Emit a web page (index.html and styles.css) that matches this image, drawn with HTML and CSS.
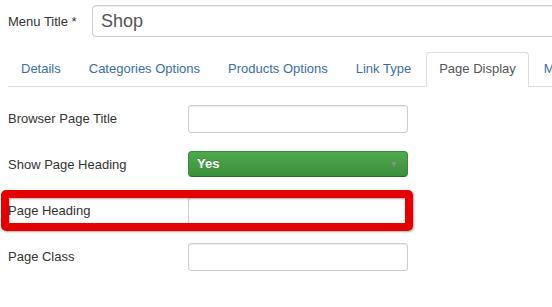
FILE: index.html
```html
<!DOCTYPE html>
<html>
<head>
<meta charset="utf-8">
<link rel="stylesheet" href="styles.css">
</head>
<body>
<div class="title-row">
  <label class="title-label">Menu Title *</label>
  <div class="title-input">Shop</div>
</div>
<ul class="tabs">
  <li><a>Details</a></li>
  <li><a>Categories Options</a></li>
  <li><a>Products Options</a></li>
  <li><a>Link Type</a></li>
  <li class="active"><a>Page Display</a></li>
  <li><a>Metadata</a></li>
</ul>
<div class="tab-content">
  <div class="control-group">
    <div class="control-label">Browser Page Title</div>
    <div class="text-input"></div>
  </div>
  <div class="control-group">
    <div class="control-label">Show Page Heading</div>
    <div class="select-yes"><span>Yes</span><i class="caret"></i></div>
  </div>
  <div class="control-group highlighted">
    <div class="control-label">Page Heading</div>
    <div class="text-input"></div>
    <div class="red-box"></div>
  </div>
  <div class="control-group">
    <div class="control-label">Page Class</div>
    <div class="text-input"></div>
  </div>
</div>
</body>
</html>
```
FILE: styles.css
```css
html, body {
  margin: 0;
  overflow: hidden;
  background: #fff;
}
body {
  width: 552px;
  height: 307px;
  box-sizing: border-box;
  padding: 5px 0 0 8px;
  font-family: "Liberation Sans", Arial, sans-serif;
  font-size: 13px;
  color: #333;
}
.title-row {
  display: flex;
  align-items: center;
  height: 32px;
  white-space: nowrap;
}
.title-label {
  width: 84px;
  flex: none;
}
.title-input {
  flex: none;
  width: 500px;
  height: 32px;
  box-sizing: border-box;
  border: 1px solid #ccc;
  border-radius: 4px;
  padding: 0 8px;
  font-size: 18px;
  line-height: 30px;
  color: #555;
  box-shadow: inset 0 1px 1px rgba(0,0,0,0.075);
}
.tabs {
  list-style: none;
  margin: 15px 0 0 0;
  padding: 0;
  display: flex;
  border-bottom: 1px solid #ddd;
  white-space: nowrap;
}
.tabs li {
  flex: none;
  margin-bottom: -1px;
}
.tabs a {
  display: block;
  padding: 7px 12px 8px;
  line-height: 18px;
  margin-right: 2px;
  border: 1px solid transparent;
  border-radius: 4px 4px 0 0;
  color: #3a6ea8;
}
.tabs li.active a {
  color: #555;
  background: #fff;
  border-color: #ddd #ddd transparent;
}
.tab-content {
  padding-top: 18px;
}
.control-group {
  display: flex;
  align-items: flex-start;
  height: 28px;
  margin-bottom: 18px;
  position: relative;
}
.control-label {
  width: 180px;
  flex: none;
  line-height: 27px;
}
.text-input {
  width: 220px;
  height: 28px;
  box-sizing: border-box;
  border: 1px solid #ccc;
  border-radius: 3px;
  box-shadow: inset 0 1px 1px rgba(0,0,0,0.075);
  background: #fff;
}
.select-yes {
  position: relative;
  width: 220px;
  height: 26px;
  box-sizing: border-box;
  border: 1px solid #3a8a3a;
  border-bottom-color: #2a6a2a;
  border-radius: 4px;
  background: linear-gradient(#4eaa4e, #3b8f3b);
  color: #fff;
  font-weight: bold;
  line-height: 23px;
  padding-left: 8px;
  text-shadow: 0 -1px 0 rgba(0,0,0,0.2);
}
.caret {
  position: absolute;
  right: 10px;
  top: 10px;
  width: 0;
  height: 0;
  border-top: 5px solid #888f88;
  border-left: 3.5px solid transparent;
  border-right: 3.5px solid transparent;
}
.red-box {
  position: absolute;
  left: -7px;
  top: -7px;
  width: 412px;
  height: 41px;
  box-sizing: border-box;
  border: 8px solid #e40000;
  border-radius: 5px;
  box-shadow: 1px 1px 2px rgba(0,0,0,0.35), inset 1px 1px 2px rgba(0,0,0,0.3);
}
```
